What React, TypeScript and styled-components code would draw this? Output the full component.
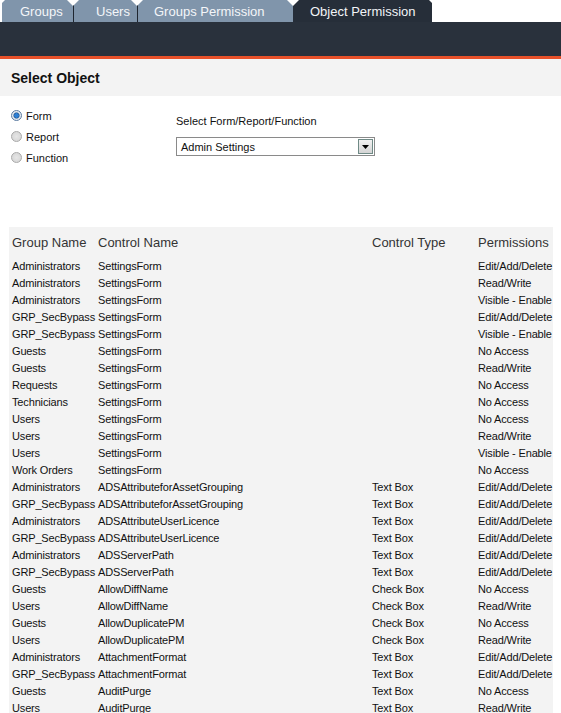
import React from 'react';
import styled, { createGlobalStyle } from 'styled-components';

const GlobalStyle = createGlobalStyle`
  body {
    margin: 0;
    background: #fff;
    font-family: 'Liberation Sans', Arial, sans-serif;
  }
`;

type Row = [string, string, string, string];

const rows: Row[] = [
  ['Administrators', 'SettingsForm', '', 'Edit/Add/Delete'],
  ['Administrators', 'SettingsForm', '', 'Read/Write'],
  ['Administrators', 'SettingsForm', '', 'Visible - Enable'],
  ['GRP_SecBypass', 'SettingsForm', '', 'Edit/Add/Delete'],
  ['GRP_SecBypass', 'SettingsForm', '', 'Visible - Enable'],
  ['Guests', 'SettingsForm', '', 'No Access'],
  ['Guests', 'SettingsForm', '', 'Read/Write'],
  ['Requests', 'SettingsForm', '', 'No Access'],
  ['Technicians', 'SettingsForm', '', 'No Access'],
  ['Users', 'SettingsForm', '', 'No Access'],
  ['Users', 'SettingsForm', '', 'Read/Write'],
  ['Users', 'SettingsForm', '', 'Visible - Enable'],
  ['Work Orders', 'SettingsForm', '', 'No Access'],
  ['Administrators', 'ADSAttributeforAssetGrouping', 'Text Box', 'Edit/Add/Delete'],
  ['GRP_SecBypass', 'ADSAttributeforAssetGrouping', 'Text Box', 'Edit/Add/Delete'],
  ['Administrators', 'ADSAttributeUserLicence', 'Text Box', 'Edit/Add/Delete'],
  ['GRP_SecBypass', 'ADSAttributeUserLicence', 'Text Box', 'Edit/Add/Delete'],
  ['Administrators', 'ADSServerPath', 'Text Box', 'Edit/Add/Delete'],
  ['GRP_SecBypass', 'ADSServerPath', 'Text Box', 'Edit/Add/Delete'],
  ['Guests', 'AllowDiffName', 'Check Box', 'No Access'],
  ['Users', 'AllowDiffName', 'Check Box', 'Read/Write'],
  ['Guests', 'AllowDuplicatePM', 'Check Box', 'No Access'],
  ['Users', 'AllowDuplicatePM', 'Check Box', 'Read/Write'],
  ['Administrators', 'AttachmentFormat', 'Text Box', 'Edit/Add/Delete'],
  ['GRP_SecBypass', 'AttachmentFormat', 'Text Box', 'Edit/Add/Delete'],
  ['Guests', 'AuditPurge', 'Text Box', 'No Access'],
  ['Users', 'AuditPurge', 'Text Box', 'Read/Write'],
];

const tabs = [
  { label: 'Groups', width: 71, pad: 18 },
  { label: 'Users', width: 64, pad: 22 },
  { label: 'Groups Permission', width: 156, pad: 16 },
  { label: 'Object Permission', width: 139, pad: 17, active: true },
];

const App = () => (
  <Page>
    <GlobalStyle />
    <TabBar>
      {tabs.map((t, i) => (
        <Tab key={t.label} $w={t.width} $pad={t.pad} $active={!!t.active} $first={i === 0}>
          {t.label}
        </Tab>
      ))}
    </TabBar>
    <Banner />
    <SectionTitle>Select Object</SectionTitle>
    <Options>
      <RadioGroup>
        {['Form', 'Report', 'Function'].map((r, i) => (
          <RadioRow key={r}>
            <Radio $checked={i === 0} />
            {r}
          </RadioRow>
        ))}
      </RadioGroup>
      <SelectGroup>
        <SelectLabel>Select Form/Report/Function</SelectLabel>
        <SelectBox>
          Admin Settings
          <SelectArrow>
            <svg width='7' height='4' viewBox='0 0 7 4'>
              <path d='M0 0h7L3.5 4z' fill='#000' />
            </svg>
          </SelectArrow>
        </SelectBox>
      </SelectGroup>
    </Options>
    <TableWrap>
      <Table>
        <colgroup>
          <col style={{ width: 86 }} />
          <col style={{ width: 274 }} />
          <col style={{ width: 106 }} />
          <col style={{ width: 78 }} />
        </colgroup>
        <thead>
          <tr>
            <Th>Group Name</Th>
            <Th>Control Name</Th>
            <Th>Control Type</Th>
            <Th>Permissions</Th>
          </tr>
        </thead>
        <tbody>
          {rows.map((r, i) => (
            <tr key={i}>
              {r.map((c, j) => (
                <Td key={j}>{c}</Td>
              ))}
            </tr>
          ))}
        </tbody>
      </Table>
    </TableWrap>
  </Page>
);

export default App;

const Page = styled.div`
  width: 561px;
  height: 713px;
  overflow: hidden;
`;

const TabBar = styled.div`
  height: 22px;
  padding-left: 2px;
  display: flex;
  align-items: flex-end;
`;

const Tab = styled.div<{ $w: number; $pad: number; $active: boolean; $first: boolean }>`
  width: ${p => p.$w}px;
  height: 22px;
  box-sizing: border-box;
  display: flex;
  align-items: center;
  padding: 1px 0 0 ${p => p.$pad}px;
  font-size: 13px;
  white-space: nowrap;
  color: ${p => (p.$active ? '#f2f4f7' : '#f4f6f9')};
  background: ${p => (p.$active ? '#262e39' : '#8095ab')};
  border-left: ${p => (p.$first || p.$active ? 'none' : '1px solid #1f2630')};
  clip-path: ${p =>
    p.$first
      ? 'polygon(0 3px, 3px 0, calc(100% - 6px) 0, 100% 6px, 100% 100%, 0 100%)'
      : p.$active
      ? 'polygon(0 6px, 6px 0, calc(100% - 3px) 0, 100% 3px, 100% 100%, 0 100%)'
      : 'polygon(0 6px, 6px 0, calc(100% - 6px) 0, 100% 6px, 100% 100%, 0 100%)'};
`;

const Banner = styled.div`
  height: 34px;
  background: #29313c;
  border-bottom: 3px solid #e8512a;
`;

const SectionTitle = styled.div`
  height: 37px;
  box-sizing: border-box;
  padding: 11px 11px 0;
  background: #f3f3f3;
  font-size: 14px;
  font-weight: bold;
  color: #111;
`;

const Options = styled.div`
  height: 131px;
  display: flex;
  padding-left: 11px;
  box-sizing: border-box;
`;

const RadioGroup = styled.div`
  width: 165px;
  padding-top: 9px;
  display: flex;
  flex-direction: column;
`;

const RadioRow = styled.div`
  height: 21px;
  display: flex;
  align-items: center;
  gap: 4px;
  font-size: 11px;
  color: #111;
`;

const Radio = styled.span<{ $checked: boolean }>`
  width: 11px;
  height: 11px;
  box-sizing: border-box;
  border-radius: 50%;
  border: 1px solid ${p => (p.$checked ? '#5a7aa0' : '#a9a9a9')};
  background: ${p =>
    p.$checked
      ? 'radial-gradient(circle, #2d7fd4 0 2px, #1b4f8a 2.5px, #dfe6ee 3.5px, #f4f6f8 100%)'
      : 'radial-gradient(circle, #e6e6e6 0, #d2d2d2 100%)'};
`;

const SelectGroup = styled.div`
  padding-top: 18px;
  display: flex;
  flex-direction: column;
`;

const SelectLabel = styled.div`
  height: 14px;
  line-height: 14px;
  font-size: 11px;
  color: #111;
  margin-bottom: 9px;
`;

const SelectBox = styled.div`
  width: 199px;
  height: 19px;
  box-sizing: border-box;
  border: 1px solid #8a8a8a;
  padding-left: 4px;
  display: flex;
  align-items: center;
  justify-content: space-between;
  font-size: 11px;
  color: #111;
  background: #fff;
`;

const SelectArrow = styled.span`
  width: 15px;
  height: 15px;
  margin-right: 1px;
  box-sizing: border-box;
  border: 1px solid #6f8a86;
  background: linear-gradient(#f2f2f2, #d4d4d4);
  display: flex;
  align-items: center;
  justify-content: center;
`;

const TableWrap = styled.div`
  margin-left: 9px;
  width: 544px;
  background: #f3f3f3;
`;

const Table = styled.table`
  width: 544px;
  table-layout: fixed;
  border-collapse: collapse;
`;

const Th = styled.th`
  height: 31px;
  padding: 0 0 0 3px;
  text-align: left;
  font-weight: normal;
  font-size: 13px;
  line-height: 15px;
  color: #333;
  white-space: nowrap;
  vertical-align: middle;
`;

const Td = styled.td`
  height: 17px;
  padding: 0 0 0 3px;
  font-size: 11px;
  line-height: 17px;
  letter-spacing: -0.15px;
  color: #111;
  white-space: nowrap;
`;
